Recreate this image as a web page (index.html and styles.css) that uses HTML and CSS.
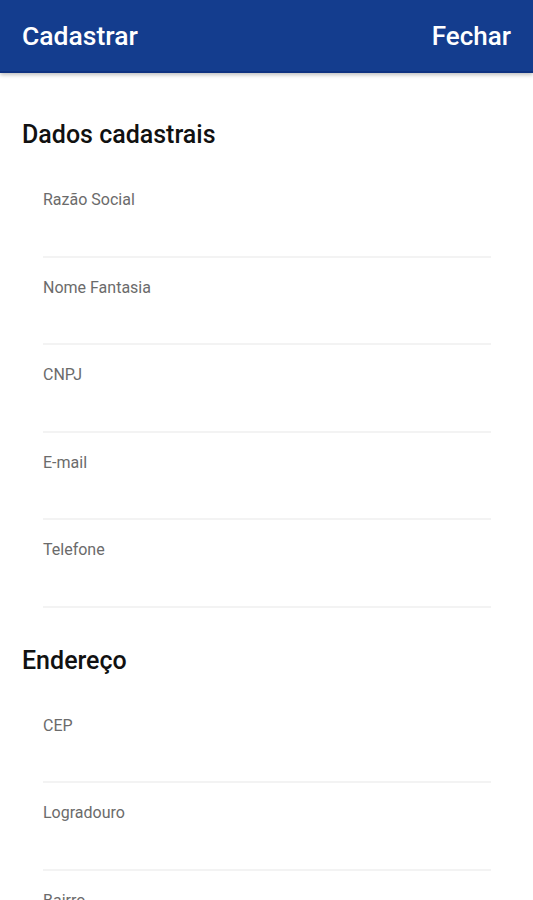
FILE: index.html
```html
<!DOCTYPE html>
<html>
  <head>
    <title>Cadastrar</title>
    <link rel="stylesheet" href="styles.css">
  </head>
  <body>
    <header class="topbar">
      <h1 class="topbar-title">Cadastrar</h1>
      <button class="topbar-action" type="button">Fechar</button>
    </header>
    <form class="form" id="form">
      <section class="section">
        <h2 class="section-title">Dados cadastrais</h2>
        <label class="field">
          <span class="field-label">Razão Social</span>
          <input class="field-input" type="text" name="razao" />
        </label>
        <label class="field">
          <span class="field-label">Nome Fantasia</span>
          <input class="field-input" type="text" name="fantasia" />
        </label>
        <label class="field">
          <span class="field-label">CNPJ</span>
          <input class="field-input" type="text" name="cnpj" />
        </label>
        <label class="field">
          <span class="field-label">E-mail</span>
          <input class="field-input" type="email" name="email" />
        </label>
        <label class="field">
          <span class="field-label">Telefone</span>
          <input class="field-input" type="tel" name="telefone" />
        </label>
      </section>
      <section class="section">
        <h2 class="section-title">Endereço</h2>
        <label class="field">
          <span class="field-label">CEP</span>
          <input class="field-input" type="text" name="cep" />
        </label>
        <label class="field">
          <span class="field-label">Logradouro</span>
          <input class="field-input" type="text" name="logradouro" />
        </label>
        <label class="field">
          <span class="field-label">Bairro</span>
          <input class="field-input" type="text" name="bairro" />
        </label>
      </section>
    </form>
  </body>
</html>
```

FILE: styles.css
```css
body {
  margin: 0;
  background-color: #fff;
  font-family: Roboto, "Noto Sans", sans-serif;
  overflow: hidden;
}

.topbar {
  display: flex;
  align-items: center;
  justify-content: space-between;
  height: 71px;
  padding: 0 22px;
  background-color: #143d8e;
  border-bottom: 2px solid #0e3180;
  box-shadow: 0 2px 4px rgba(0, 0, 0, 0.25);
}

.topbar-title {
  margin: 0;
  font-size: 26.5px;
  font-weight: 500;
  color: #fff;
}

.topbar-action {
  padding: 0;
  background: none;
  border: none;
  font-family: inherit;
  font-size: 26px;
  font-weight: 500;
  color: #fff;
  cursor: pointer;
}

.form {
  padding-top: 8px;
}

.section {
  padding: 40px 0 0;
}

.section + .section {
  padding-top: 39px;
}

.section-title {
  margin: 0 0 21px 22px;
  font-size: 25px;
  line-height: 28px;
  font-weight: 500;
  color: #111;
}

.field {
  display: flex;
  flex-direction: column;
  margin: 0 42px 0 43px;
  padding-top: 21px;
  border-bottom: 2px solid #f3f3f3;
}

.field-label {
  font-size: 16px;
  line-height: 18px;
  color: #6b6b6b;
}

.field-input {
  height: 46.5px;
  padding: 0;
  border: none;
  outline: none;
  background: transparent;
  font-family: inherit;
  font-size: 16px;
}
```
